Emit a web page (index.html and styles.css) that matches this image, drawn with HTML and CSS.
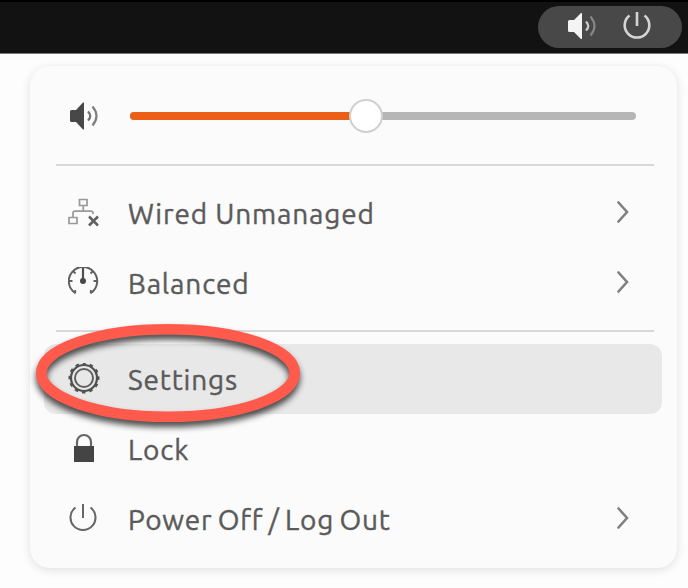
FILE: index.html
```html
<!DOCTYPE html>
<html lang="en">
<head>
    <meta charset="UTF-8">
    <meta name="viewport" content="width=device-width, initial-scale=1.0">
    <title>System Menu</title>
    <link rel="stylesheet" href="styles.css">
</head>
<body>
    <header class="top-bar">
        <div class="status-pill">
            <svg class="icon" viewBox="0 0 32 32">
                <path d="M2 11.5q0-1.500 1.500-1.500H8L15 3h1v26h-1L8 22H3.500Q2 22 2 20.500z" fill="#f4f4f4"/>
                <path d="M20 11.500q4.500 4.500 0 9" fill="none" stroke="#ccc" stroke-width="2.200"/>
                <path d="M24.500 6.500q8 9.500 0 19" fill="none" stroke="#888" stroke-width="2"/>
            </svg>
            <svg class="icon" viewBox="0 0 32 32">
                <path d="M8.500 5.500a12.300 12.300 0 1 0 15 0M16 2v14" fill="none" stroke="#d4d4d4" stroke-width="2.600"/>
            </svg>
        </div>
    </header>

    <main class="menu">
        <div class="volume-row">
            <svg class="icon" viewBox="0 0 32 32">
                <path d="M2 11.500Q2 10 3.500 10H8L15 2.500h1v27h-1L8 22H3.500Q2 22 2 20.500z" fill="#484848"/>
                <path d="M20 11.500q4.500 4.500 0 9" fill="none" stroke="#707070" stroke-width="2.200"/>
                <path d="M24.500 6.500q8 9.500 0 19" fill="none" stroke="#808080" stroke-width="2.200"/>
            </svg>
            <div class="slider">
                <div class="slider-fill"></div>
                <div class="slider-handle"></div>
            </div>
        </div>

        <hr class="separator">

        <div class="menu-item">
            <svg class="icon" viewBox="0 0 32 32">
                <path d="M11.500 2.500h7.500v6h-7.500zM1 20.500h8v6H1zM15.300 8.500v6M5 20.500V16q0-1.800 1.800-1.800H23q2 0 2 2V17" fill="none" stroke="#999" stroke-width="1.700"/>
                <path d="M21 19.500l9 9M30 19.500l-9 9" fill="none" stroke="#606060" stroke-width="2.500"/>
            </svg>
            <span class="label">Wired Unmanaged</span>
            <svg class="chevron" viewBox="0 0 12 22"><path d="M1.500 1.500l8.500 9.500-8.500 9.500"/></svg>
        </div>
        <div class="menu-item">
            <svg class="icon" viewBox="0 0 32 32">
                <path d="M7.200 26A14.200 14.200 0 1 1 22.800 26" fill="none" stroke="#606060" stroke-width="2"/>
                <path d="M15 1v13" fill="none" stroke="#505050" stroke-width="2.200"/>
                <path d="M1 14h3.500M25.500 14H29M5 4l2.500 2.500M25 4l-2.500 2.500M7.200 26.500v-3.500M22.800 26.500v-3.500" fill="none" stroke="#606060" stroke-width="1.800"/>
                <circle cx="15" cy="14" r="3" fill="#484848"/>
            </svg>
            <span class="label">Balanced</span>
            <svg class="chevron" viewBox="0 0 12 22"><path d="M1.500 1.500l8.500 9.500-8.500 9.500"/></svg>
        </div>

        <hr class="separator">

        <div class="menu-item active">
            <svg class="icon" viewBox="0 0 32 32">
                <circle cx="16" cy="15" r="13" fill="none" stroke="#505050" stroke-width="2.200"/>
                <!-- gear teeth -->
                <circle cx="16" cy="15" r="14.500" fill="none" stroke="#505050" stroke-width="2" stroke-dasharray="3.600 3.992" stroke-dashoffset="1.800" transform="rotate(-90 16 15)"/>
                <circle cx="16" cy="15" r="9" fill="none" stroke="#606060" stroke-width="2"/>
            </svg>
            <span class="label">Settings</span>
            <!-- red ring around the Settings entry -->
            <svg class="ring" viewBox="0 0 274 116">
                <ellipse cx="137" cy="54" rx="126.700" ry="43.700"/>
            </svg>
        </div>
        <div class="menu-item">
            <svg class="icon" viewBox="0 0 32 32">
                <path d="M9 14V9a7 7 0 0 1 14 0v5" fill="none" stroke="#666" stroke-width="2.200"/>
                <path d="M6 13h20v16H6z" fill="#444"/>
            </svg>
            <span class="label">Lock</span>
        </div>
        <div class="menu-item">
            <svg class="icon" viewBox="0 0 32 32">
                <path d="M7.500 4.500a12.500 12.500 0 1 0 15 0M15 1v14" fill="none" stroke="#666" stroke-width="2"/>
            </svg>
            <span class="label label-power">Power Off / Log Out</span>
            <svg class="chevron" viewBox="0 0 12 22"><path d="M1.500 1.500l8.500 9.500-8.500 9.500"/></svg>
        </div>
    </main>
</body>
</html>
```

FILE: styles.css
```css
body {
    margin: 0;
    height: 588px;
    overflow: hidden;
    background-color: #fdfdfd;
    font-family: "Ubuntu", "Noto Sans", sans-serif;
}

/* Top panel */
.top-bar {
    display: flex;
    justify-content: flex-end;
    box-sizing: border-box;
    height: 54px;
    padding: 6px 6px 0 0;
    background-color: #121212;
    border-bottom: 1px solid #777;
    box-shadow: inset 0 2px 0 #000;
}

.status-pill {
    display: flex;
    gap: 23px;
    box-sizing: border-box;
    width: 144px;
    height: 42px;
    padding: 4px 0 0 28px;
    border-radius: 21px;
    background-color: #484848;
}

.icon {
    display: block;
    flex: none;
    width: 32px;
    height: 32px;
}

/* Drop-down menu */
.menu {
    box-sizing: border-box;
    width: 647px;
    height: 502px;
    margin: 12px 0 0 30px;
    padding: 0 15px 14px 14px;
    border-radius: 20px;
    background-color: #fbfbfb;
    box-shadow: 0 2px 10px rgba(0, 0, 0, 0.12);
}

.volume-row {
    display: flex;
    align-items: center;
    height: 98px;
    padding: 0 26px 0 24px;
    gap: 30px;
}

.volume-row .icon {
    margin-top: 2px;
}

.slider {
    display: flex;
    align-items: center;
    flex: 1;
    height: 8px;
    margin-top: 2px;
    border-radius: 4px;
    background-color: #b6b6b6;
}

.slider-fill {
    width: 222px;
    height: 8px;
    border-radius: 4px 0 0 4px;
    background-color: #eb6016;
}

.slider-handle {
    box-sizing: border-box;
    width: 34px;
    height: 34px;
    margin-left: -3px;
    border: 2px solid #d0d0d0;
    border-radius: 50%;
    background-color: #fff;
}

.separator {
    height: 2px;
    margin: 0 8px 12px 12px;
    border: none;
    background-color: #d8d8d8;
}

.menu-item + .separator {
    margin-top: 12px;
}

.menu-item {
    position: relative;
    display: flex;
    align-items: center;
    box-sizing: border-box;
    height: 70px;
    padding: 0 33px 0 24px;
    gap: 28px;
    border-radius: 12px;
}

.menu-item.active {
    background-color: #e8e8e8;
}

.label {
    flex: 1;
    padding-top: 2px;
    color: #5a5a5a;
    font-size: 28px;
    line-height: 40px;
    letter-spacing: 0.85px;
    white-space: nowrap;
    -webkit-text-stroke: 0.4px #5a5a5a;
}

.label-power {
    letter-spacing: 0.75px;
    word-spacing: -1.7px;
}

.chevron {
    flex: none;
    width: 12px;
    height: 22px;
    margin-top: -2px;
}

.chevron path {
    fill: none;
    stroke: #808080;
    stroke-width: 2.6;
    stroke-linecap: round;
}

.ring {
    position: absolute;
    top: -25px;
    left: -13px;
    z-index: 1;
    width: 274px;
    height: 116px;
    overflow: visible;
}

.ring ellipse {
    fill: none;
    stroke: #ff5a4c;
    stroke-width: 10.6;
    filter: drop-shadow(0 5px 3px rgba(0, 0, 0, 0.7));
}
```
